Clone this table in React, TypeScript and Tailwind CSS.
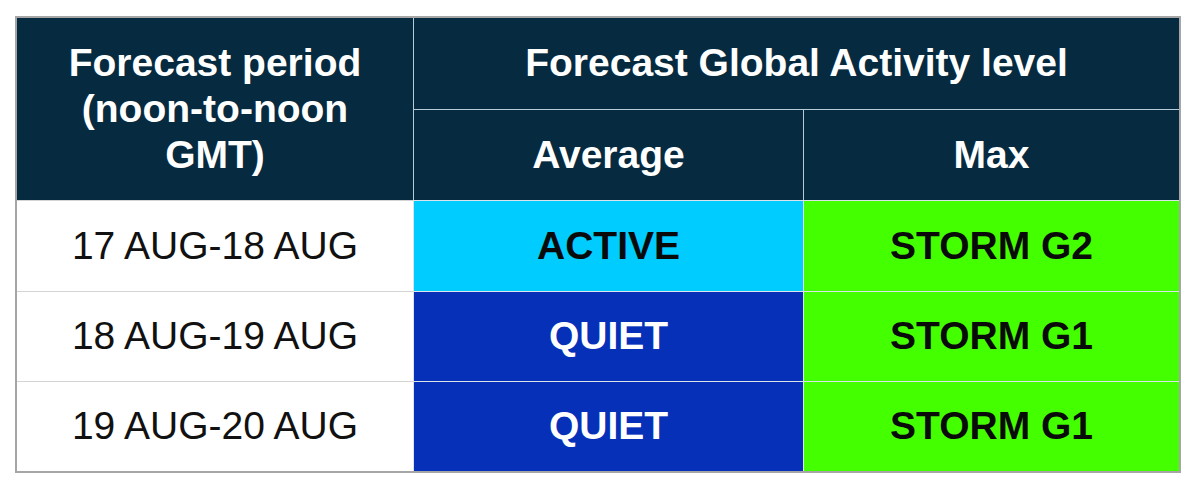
const rows = [
  { period: "17 AUG-18 AUG", avg: "ACTIVE", avgClass: "bg-[#00ccff] text-[#0a0a0a]", max: "STORM G2" },
  { period: "18 AUG-19 AUG", avg: "QUIET", avgClass: "bg-[#0630b8] text-white", max: "STORM G1" },
  { period: "19 AUG-20 AUG", avg: "QUIET", avgClass: "bg-[#0630b8] text-white", max: "STORM G1" },
];

export default function App() {
  return (
    <div className="h-[488px] w-[1200px] bg-white pl-[15px] pt-[16px] font-['Liberation_Sans',Arial,sans-serif] text-[39px]">
      <div className="grid w-[1166px] grid-cols-[396px_390px_376px] grid-rows-[91px_91px_91px_90px_90px] border-2 border-[#a6a6a6]">
        <div className="row-span-2 flex items-center justify-center bg-[#062a3f] text-center font-bold leading-[46px] text-white">
          Forecast period
          <br />
          (noon-to-noon
          <br />
          GMT)
        </div>
        <div className="col-span-2 flex items-center justify-center border-l border-[#b8ccd8] bg-[#062a3f] font-bold text-white">
          Forecast Global Activity level
        </div>
        <div className="flex items-center justify-center border-l border-t border-[#b8ccd8] bg-[#062a3f] font-bold text-white">
          Average
        </div>
        <div className="flex items-center justify-center border-l border-t border-[#b8ccd8] bg-[#062a3f] font-bold text-white">
          Max
        </div>
        {rows.map((r) => (
          <div key={r.period} className="contents">
            <div className="flex items-center justify-center border-t border-[#d4d4d4] bg-white text-[#111]">
              {r.period}
            </div>
            <div className={`flex items-center justify-center border-l border-t border-[#dde3ea] font-bold ${r.avgClass}`}>
              {r.avg}
            </div>
            <div className="flex items-center justify-center border-l border-t border-[#dde3ea] bg-[#44ff00] font-bold text-[#0a0a0a]">
              {r.max}
            </div>
          </div>
        ))}
      </div>
    </div>
  );
}
